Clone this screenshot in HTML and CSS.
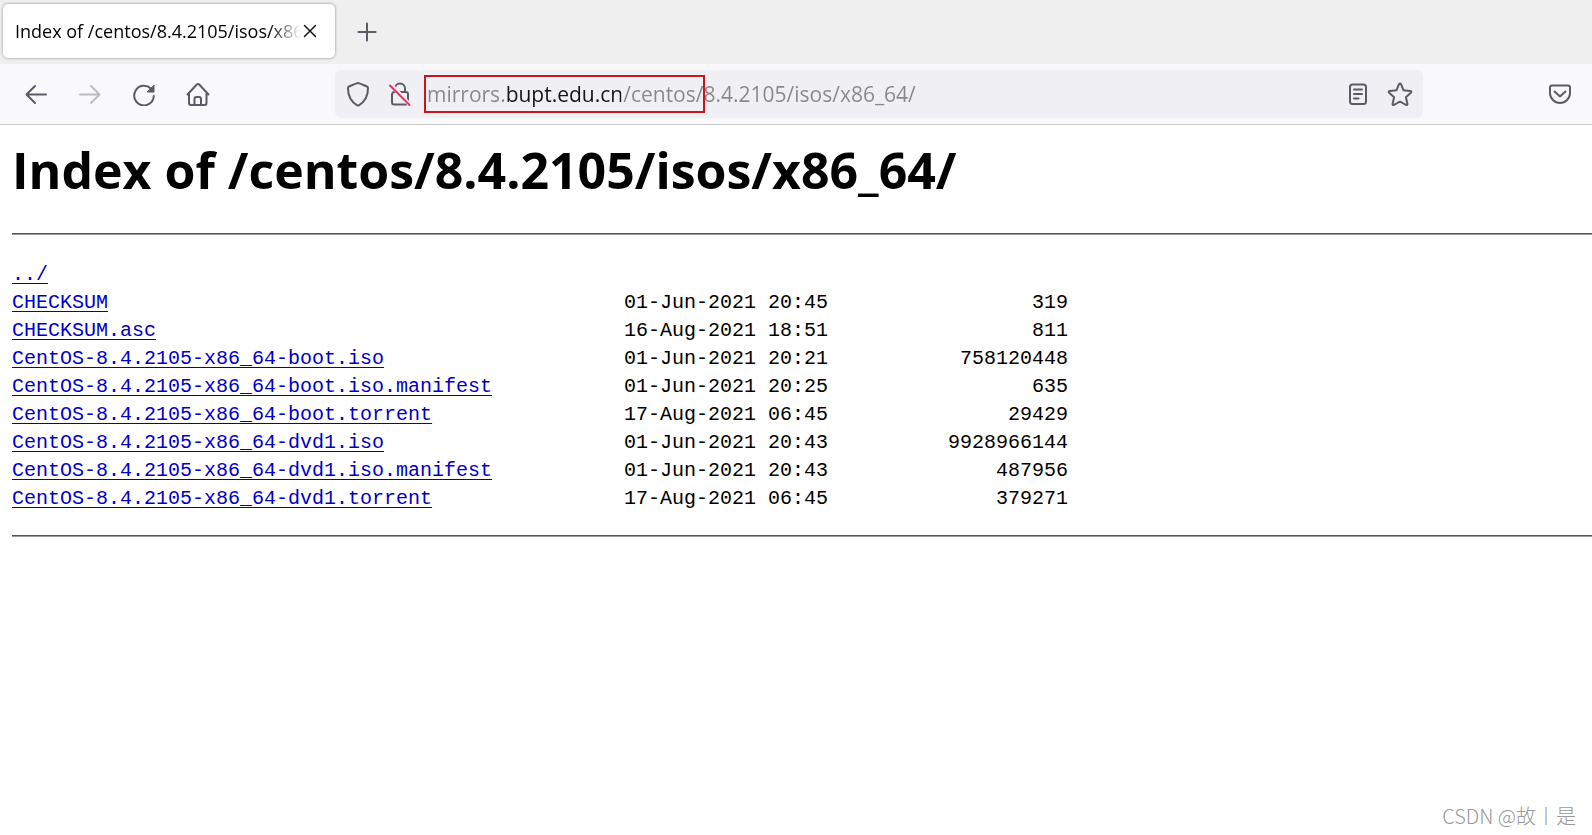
FILE: index.html
```
<!DOCTYPE html>
<html lang="en">
<head>
<meta charset="utf-8">
<title>Index of /centos/8.4.2105/isos/x86_64/</title>
<link rel="stylesheet" href="styles.css">
</head>
<body>
<header class="browser">
  <div class="tabstrip">
    <div class="tab">
      <span class="tab-title">Index of /centos/8.4.2105/isos/x86_64/</span>
      <button class="tab-close" aria-label="Close tab"><svg width="14" height="14" viewBox="0 0 14 14"><path d="M1.5 1.5l11 11M12.5 1.5l-11 11"/></svg></button>
    </div>
    <button class="new-tab" aria-label="New tab"><svg width="20" height="20" viewBox="0 0 20 20"><path d="M10 1.5v17M1.5 10h17"/></svg></button>
  </div>
  <div class="toolbar">
    <nav class="nav">
      <button class="tool" aria-label="Back"><svg width="24" height="24" viewBox="0 0 24 24"><path d="M22 12.500H3M11 4L2.500 12.500l8.500 8.500"/></svg></button>
      <button class="tool tool-off" aria-label="Forward"><svg width="24" height="24" viewBox="0 0 24 24"><path d="M2 12.500h19M13 4L21.500 12.500 13 21"/></svg></button>
      <button class="tool" aria-label="Reload"><svg width="24" height="24" viewBox="0 0 24 24"><path d="M21.800 14A9.800 9.800 0 1 1 18.800 6.500L20.500 8.200"/><path class="solid" d="M22 3.500v6.500h-6.500z"/></svg></button>
      <button class="tool" aria-label="Home"><svg width="24" height="24" viewBox="0 0 24 24"><path d="M1.500 12.500L10.800 2.500q1.200-1 2.400 0L22.500 12.500M3 11.500v9.500q0 2 2 2h13.500q2 0 2-2v-9.500M8.500 22.500v-5.500q0-2 2-2h2.500q2 0 2 2v5.500"/></svg></button>
    </nav>
    <div class="urlbar">
      <button class="url-icon" aria-label="Tracking protection"><svg width="24" height="26" viewBox="0 0 24 26"><path d="M12 2q1 0 9 3.500 1 .5 1 1.800C22 15 19.500 20.500 12.800 24.300q-.8.400-1.600 0C4.500 20.500 2 15 2 7.300q0-1.300 1-1.800Q11 2 12 2z"/></svg></button>
      <button class="url-icon" aria-label="Connection not secure"><svg width="24" height="26" viewBox="0 0 24 26"><path d="M7 11V7.500a5 5 0 0 1 10 0V11M4.500 12.500q0-1.500 1.500-1.500h12q2 0 2 2v8.500q0 2-2 2H6q-2 0-2-2v-8.500"/><path class="halo" d="M3 4l19 20"/><path class="slash" d="M2 4.500l19.500 19.500"/></svg></button>
      <div class="url-field">
        <input class="url-input" type="text" aria-label="Address" value="mirrors.bupt.edu.cn/centos/8.4.2105/isos/x86_64/">
        <span class="highlight"></span>
      </div>
      <button class="url-icon" aria-label="Reader view"><svg width="24" height="26" viewBox="0 0 24 26"><rect x="4" y="3.500" width="16" height="19.500" rx="2.500"/><path d="M8 8.500h8M8 13h8M8 17.500h4.500"/></svg></button>
      <button class="url-icon" aria-label="Bookmark"><svg width="26" height="26" viewBox="0 0 26 26"><path d="M12 3.200q1-1.600 2 0l2.600 6.100 6.600.6q1.900.4.700 1.800l-5 4.500 1.500 6.500q.2 1.900-1.500 1.200L13 20.500l-5.900 3.400q-1.700.7-1.500-1.200l1.500-6.500-5-4.500q-1.200-1.400.7-1.800l6.600-.6z"/></svg></button>
    </div>
    <button class="tool" aria-label="Save to Pocket"><svg width="24" height="24" viewBox="0 0 24 24"><path d="M4 3.500h16q2 0 2 2V11a10 10 0 0 1-20 0V5.500q0-2 2-2zM6.500 9.500L12 14.500l5.500-5"/></svg></button>
  </div>
</header>
<main class="page">
  <h1 class="heading">Index of /centos/8.4.2105/isos/x86_64/</h1>
  <hr class="rule">
  <table class="listing">
    <tr><td class="name"><a href="#">../</a></td><td class="date"></td><td class="size"></td></tr>
    <tr><td class="name"><a href="#">CHECKSUM</a></td><td class="date">01-Jun-2021 20:45</td><td class="size">319</td></tr>
    <tr><td class="name"><a href="#">CHECKSUM.asc</a></td><td class="date">16-Aug-2021 18:51</td><td class="size">811</td></tr>
    <tr><td class="name"><a href="#">CentOS-8.4.2105-x86_64-boot.iso</a></td><td class="date">01-Jun-2021 20:21</td><td class="size">758120448</td></tr>
    <tr><td class="name"><a href="#">CentOS-8.4.2105-x86_64-boot.iso.manifest</a></td><td class="date">01-Jun-2021 20:25</td><td class="size">635</td></tr>
    <tr><td class="name"><a href="#">CentOS-8.4.2105-x86_64-boot.torrent</a></td><td class="date">17-Aug-2021 06:45</td><td class="size">29429</td></tr>
    <tr><td class="name"><a href="#">CentOS-8.4.2105-x86_64-dvd1.iso</a></td><td class="date">01-Jun-2021 20:43</td><td class="size">9928966144</td></tr>
    <tr><td class="name"><a href="#">CentOS-8.4.2105-x86_64-dvd1.iso.manifest</a></td><td class="date">01-Jun-2021 20:43</td><td class="size">487956</td></tr>
    <tr><td class="name"><a href="#">CentOS-8.4.2105-x86_64-dvd1.torrent</a></td><td class="date">17-Aug-2021 06:45</td><td class="size">379271</td></tr>
  </table>
  <hr class="rule">
</main>
<footer class="watermark">CSDN @故丨是</footer>
</body>
</html>
```
FILE: styles.css
```
* { box-sizing: border-box; }
body {
  margin: 0;
  min-height: 100vh;
  display: flex;
  flex-direction: column;
  background: #fff;
  color: #000;
  font-family: "Open Sans", "Noto Sans", "Noto Sans CJK SC", sans-serif;
}
button {
  display: flex;
  align-items: center;
  justify-content: center;
  border: 0;
  padding: 0;
  background: none;
  color: #5b5b66;
}
svg { fill: none; stroke: currentColor; stroke-width: 2; stroke-linecap: round; stroke-linejoin: round; }
.solid { fill: currentColor; stroke-width: 1; }
.halo { stroke: #f0f0f4; stroke-width: 4; }
.slash { stroke: #e8325c; }

.tabstrip { display: flex; height: 64px; padding: 4px 3px; background: #efefef; }
.tab {
  display: flex;
  align-items: center;
  width: 332px;
  height: 54px;
  padding: 0 16px 0 12px;
  border-radius: 5px;
  background: #fff;
  box-shadow: 0 0 3px #888;
}
.tab-title {
  flex: 1;
  min-width: 0;
  overflow: hidden;
  white-space: nowrap;
  font-size: 18px;
  line-height: 28px;
  -webkit-mask-image: linear-gradient(to left, transparent, #000 32px);
  mask-image: linear-gradient(to left, transparent, #000 32px);
}
.tab-close { width: 18px; height: 28px; color: #15141a; }
.tab-close svg { stroke-width: 1.5; }
.new-tab { width: 64px; height: 56px; }

.toolbar {
  display: flex;
  align-items: center;
  height: 61px;
  padding: 0 5px 0 9px;
  background: #f9f9fb;
  border-bottom: 1px solid #ccc;
}
.nav { display: flex; }
.tool { width: 54px; height: 48px; }
.tool-off { color: #bcbcc2; }
.urlbar {
  flex: 1;
  display: flex;
  align-items: center;
  height: 48px;
  margin: 0 110px;
  padding: 0 2px;
  border-radius: 6px;
  background: #f0f0f4;
}
.url-icon { width: 42px; height: 48px; }
.url-field { position: relative; flex: 1; }
.url-input {
  display: block;
  width: 100%;
  height: 38px;
  border: 0;
  padding: 0 0 0 6px;
  outline: 0;
  font-family: inherit;
  font-size: 21px;
  background: linear-gradient(to right, #87878c 84px, #15141a 84px, #15141a 200px, #87878c 200px);
  -webkit-background-clip: text;
  background-clip: text;
  -webkit-text-fill-color: transparent;
}
.highlight {
  position: absolute;
  top: 0;
  left: 3px;
  width: 281px;
  height: 38px;
  border: 2px solid #c8161d;
  pointer-events: none;
}

.page { flex: 1; padding-left: 12px; }
.heading { margin: 0; padding: 10px 0 28px; font-size: 50px; line-height: 70px; font-weight: 700; }
.rule { margin: 0; height: 2px; border: 0; border-top: 1px solid #555; background: #999; }
.listing {
  margin: 26px 0 22px;
  border-collapse: collapse;
  font-family: "Liberation Mono", monospace;
  font-size: 20px;
  line-height: 28px;
  white-space: nowrap;
}
.listing td { padding: 0; height: 28px; }
.listing a { color: #0000c8; text-decoration: underline 1px; text-underline-offset: 3px; }
.name { width: 612px; }
.date { width: 205px; }
.size { width: 239px; text-align: right; }

.watermark {
  align-self: flex-end;
  padding: 0 16px 6px 0;
  font-family: "Noto Sans CJK SC", sans-serif;
  font-size: 20px;
  font-weight: 300;
  line-height: 26px;
  color: #999;
}
```
